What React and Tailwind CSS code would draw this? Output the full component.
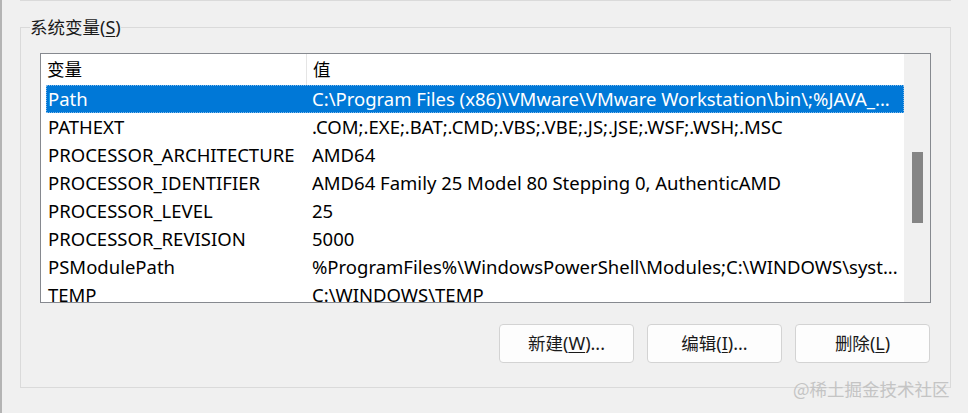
const font = { fontFamily: '"Noto Sans", "Noto Sans CJK SC", sans-serif' };

const rows = [
  ["Path", "C:\\Program Files (x86)\\VMware\\VMware Workstation\\bin\\;%JAVA_..."],
  ["PATHEXT", ".COM;.EXE;.BAT;.CMD;.VBS;.VBE;.JS;.JSE;.WSF;.WSH;.MSC"],
  ["PROCESSOR_ARCHITECTURE", "AMD64"],
  ["PROCESSOR_IDENTIFIER", "AMD64 Family 25 Model 80 Stepping 0, AuthenticAMD"],
  ["PROCESSOR_LEVEL", "25"],
  ["PROCESSOR_REVISION", "5000"],
  ["PSModulePath", "%ProgramFiles%\\WindowsPowerShell\\Modules;C:\\WINDOWS\\syst..."],
  ["TEMP", "C:\\WINDOWS\\TEMP"],
];

const Cjk = ({ children }) => (
  <span className="text-[17.5px]" style={{ fontFamily: '"Noto Sans CJK SC", sans-serif' }}>
    {children}
  </span>
);

const Button = ({ label, hot, tail }) => (
  <button className="w-[135px] h-[39px] rounded-[4px] border border-[#d3d3d3] bg-[#fdfdfd] text-[18px] text-[#1a1a1a] flex items-center justify-center">
    <Cjk>{label}</Cjk>
    <span>(</span>
    <span className="underline underline-offset-2">{hot}</span>
    <span>){tail}</span>
  </button>
);

export default function App() {
  return (
    <div className="w-[968px] h-[413px] bg-[#f0f0f0] relative overflow-hidden text-black flex" style={font}>
      {/* window edge */}
      <div className="w-[2px] h-full bg-[#b4b4b4] shrink-0" />

      <div className="flex-1">
        <div className="ml-[18px] w-[931px] h-[1px] bg-[#dadada]" />

        <fieldset className="ml-[18px] mt-[16px] w-[931px] h-[371px] border border-[#dadada] px-[9px] pb-0">
          <legend className="h-[20px] flex items-center text-[18px] leading-[20px] text-[#1a1a1a]">
            <Cjk>系统变量</Cjk>
            <span>(</span>
            <span className="underline underline-offset-2">S</span>
            <span>)</span>
          </legend>

          <div className="ml-[10px] mt-[16px] w-[891px] h-[250px] border border-[#86898f] bg-white flex">
            <div className="flex-1 flex flex-col overflow-hidden text-[18.5px]">
              <div className="h-[31px] flex shrink-0">
                <div className="w-[266px] border-r border-[#e5e5e5] pl-[6px] flex items-center">
                  <Cjk>变量</Cjk>
                </div>
                <div className="flex-1 pl-[6px] flex items-center">
                  <Cjk>值</Cjk>
                </div>
              </div>
              {rows.map(([name, value], i) => (
                <div
                  key={name}
                  className={
                    i === 0
                      ? "h-[28px] shrink-0 ml-[5px] flex items-center bg-[#0078d7] text-white outline outline-1 outline-dotted outline-[#7fb9ea] -outline-offset-1"
                      : "h-[28px] shrink-0 ml-[5px] flex items-center"
                  }
                >
                  <div className="w-[266px] pl-[2px] whitespace-nowrap overflow-hidden">{name}</div>
                  <div className="flex-1 whitespace-nowrap overflow-hidden">{value}</div>
                </div>
              ))}
            </div>
            <div className="w-[26px] bg-[#f0f0f0] flex flex-col items-center pt-[98px]">
              <div className="w-[11px] h-[71px] bg-[#858585]" />
            </div>
          </div>

          <div className="mt-[21px] mr-[11px] flex justify-end gap-[13px]">
            <Button label="新建" hot="W" tail="..." />
            <Button label="编辑" hot="I" tail="..." />
            <Button label="删除" hot="L" tail="" />
          </div>
        </fieldset>
      </div>

      <div className="absolute left-[793px] top-[378px] text-[#c4c4c4] text-[17.5px] leading-[22px]" style={{ fontFamily: '"Noto Sans CJK SC", sans-serif' }}>
        @稀土掘金技术社区
      </div>
    </div>
  );
}
